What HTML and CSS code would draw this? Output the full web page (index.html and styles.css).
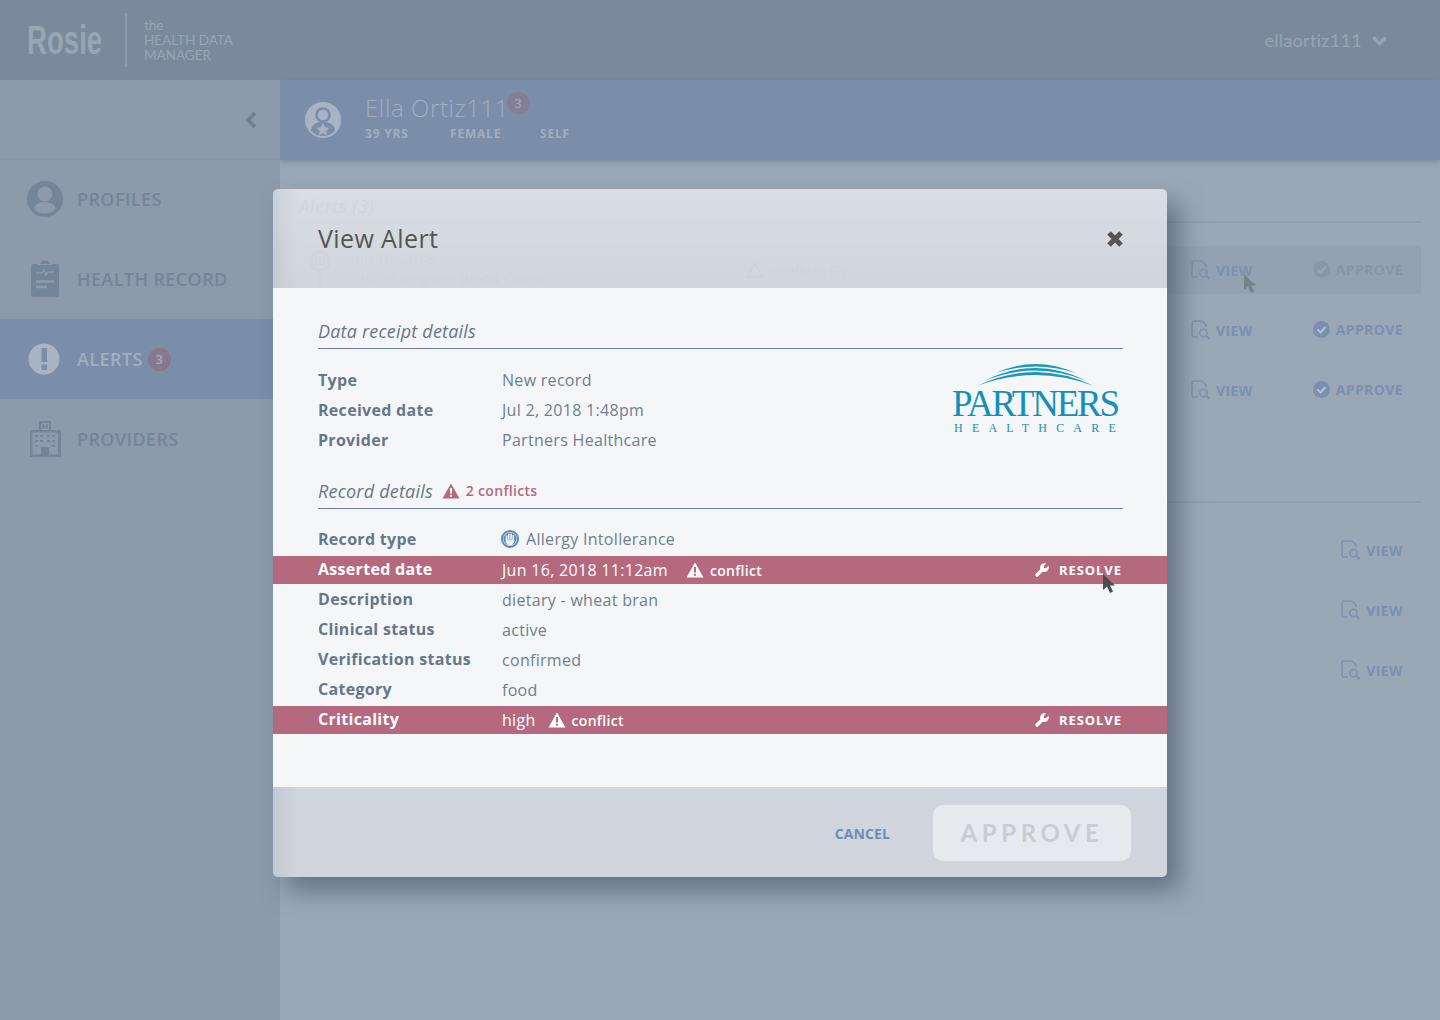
FILE: index.html
```html
<!DOCTYPE html>
<html lang="en">

<head>
  <meta charset="UTF-8" />
  <title>View Alert - Rosie</title>
  <link rel="stylesheet" href="styles.css">
</head>

<body>
  <!-- Header -->
  <div class="header">
    <div class="logo">Rosie</div>
    <div class="tagline">the<br>HEALTH DATA<br>MANAGER</div>
    <div class="user">ellaortiz111
      <svg width="15" height="11" viewBox="0 0 15 11"><path d="M1.500 2.500 7.500 8.500 13.500 2.500" fill="none" stroke="#97a5b5" stroke-width="3.400"/></svg>
    </div>
  </div>

  <div class="layout">
    <!-- Sidebar -->
    <div class="sidebar">
      <div class="toggle">
        <svg width="12" height="18" viewBox="0 0 12 18"><path d="M10 2 3 9l7 7" fill="none" stroke="#6f7f92" stroke-width="3.600"/></svg>
      </div>
      <a class="nav-item">
        <svg width="36" height="36" viewBox="0 0 36 36"><circle cx="18" cy="18" r="18" fill="#74859a"/><circle cx="18" cy="13" r="7.500" fill="#8c9aac"/><path d="M7 27.500c1.500-4.500 6-6.500 11-6.500s9.500 2 11 6.500c-2.700 3.200-6.700 5-11 5s-8.300-1.800-11-5z" fill="#8c9aac"/></svg>
        PROFILES
      </a>
      <a class="nav-item">
        <svg width="36" height="38" viewBox="0 0 36 38"><path d="M6 4h7l2-3h6l2 3h7a2 2 0 0 1 2 2v29a2 2 0 0 1-2 2H6a2 2 0 0 1-2-2V6a2 2 0 0 1 2-2z" fill="#74859a"/><path d="M11 4.500h14" stroke="#8c9aac" stroke-width="1"/><path d="M9 13h6l2-3 2 5 2-3h6" fill="none" stroke="#8c9aac" stroke-width="1.600"/><path d="M9 21.500h18M9 27h11" stroke="#8c9aac" stroke-width="2.400"/></svg>
        HEALTH RECORD
      </a>
      <a class="nav-item active">
        <svg width="36" height="36" viewBox="0 0 36 36"><circle cx="17" cy="18" r="15.500" fill="#a7b4c4"/><rect x="14.500" y="7" width="5.500" height="14" fill="#7a8da9"/><rect x="14.500" y="23.500" width="5.500" height="5.500" fill="#7a8da9"/></svg>
        ALERTS <span class="badge">3</span>
      </a>
      <a class="nav-item">
        <svg width="36" height="38" viewBox="0 0 36 38"><path d="M12 1h12v9h8a2 2 0 0 1 2 2v25H3V12a2 2 0 0 1 2-2h7z" fill="#74859a"/><rect x="14" y="3" width="8" height="7" fill="#8c9aac"/><path d="M16 4v5M20 4v5M16 6.500h4" stroke="#74859a" stroke-width="1.400"/><rect x="5.500" y="12.500" width="25.500" height="22" fill="#8c9aac"/><path d="M8 16h3M13 16h3M20 16h3M25 16h3M8 21h3M13 21h3M20 21h3M25 21h3M8 26h3M25 26h3" stroke="#74859a" stroke-width="2.200"/><rect x="14" y="27" width="8" height="9" fill="#74859a"/></svg>
        PROVIDERS
      </a>
    </div>

    <!-- Main -->
    <div class="main">
      <div class="banner">
        <svg class="avatar" width="36" height="36" viewBox="0 0 36 36"><circle cx="18" cy="18" r="18" fill="#a7b4c4"/><circle cx="18" cy="13" r="6.500" fill="none" stroke="#7a8da9" stroke-width="2.600"/><path d="M6 29c0-6 5-9 12-9s12 3 12 9c-3 3-7 5-12 5S9 32 6 29z" fill="#7a8da9"/><path d="m18 21 2 4.200 4.600.6-3.400 3.100.9 4.600-4.100-2.300-4.100 2.300.9-4.600-3.400-3.100 4.600-.6z" fill="#a7b4c4"/></svg>
        <div>
          <div class="patient-name">Ella Ortiz111<span class="name-badge">3</span></div>
          <div class="patient-meta">
            <span class="meta-age">39 YRS</span>
            <span class="meta-sex">FEMALE</span>
            <span>SELF</span>
          </div>
        </div>
      </div>

      <div class="content">
        <h3 class="alerts-title">Alerts (3)</h3>
        <div class="alert-row hover">
          <svg class="row-icon" width="22" height="48" viewBox="0 0 22 48"><circle cx="11" cy="15" r="9.500" fill="none" stroke="#75859a" stroke-width="2"/><path d="M7 11h8v8H7z" fill="none" stroke="#75859a" stroke-width="1.500"/><path d="M11 25v23" stroke="#75859a" stroke-width="1"/></svg>
          <div class="row-text">Jun 16, 2018<br>CBC - Complete Blood Count</div>
          <div class="row-conflict">
            <svg width="18" height="16" viewBox="0 0 18 16"><path d="M9 1 17 15H1z" fill="none" stroke="#75859a" stroke-width="2"/></svg>
            conflicts (2)
          </div>
          <a class="row-view"><svg width="20" height="20" viewBox="0 0 20 20"><path d="M11 1H3a2 2 0 0 0-2 2v12a2 2 0 0 0 2 2h4M11 1l4 4v2" fill="none" stroke="#7f93ae" stroke-width="1.500"/><circle cx="12.500" cy="13" r="3.700" fill="none" stroke="#7f93ae" stroke-width="1.500"/><path d="m15.500 16 3 3" stroke="#7f93ae" stroke-width="1.800"/></svg>VIEW</a>
          <a class="row-approve muted"><svg width="17" height="17" viewBox="0 0 17 17"><circle cx="8.500" cy="8.500" r="8.500" fill="#8896a8"/><path d="m4.500 8.500 3 3 5-5.500" fill="none" stroke="#9aa7b7" stroke-width="2.200"/></svg>APPROVE</a>
        </div>
        <div class="alert-row">
          <a class="row-view"><svg width="20" height="20" viewBox="0 0 20 20"><path d="M11 1H3a2 2 0 0 0-2 2v12a2 2 0 0 0 2 2h4M11 1l4 4v2" fill="none" stroke="#7f93ae" stroke-width="1.500"/><circle cx="12.500" cy="13" r="3.700" fill="none" stroke="#7f93ae" stroke-width="1.500"/><path d="m15.500 16 3 3" stroke="#7f93ae" stroke-width="1.800"/></svg>VIEW</a>
          <a class="row-approve"><svg width="17" height="17" viewBox="0 0 17 17"><circle cx="8.500" cy="8.500" r="8.500" fill="#7a90ad"/><path d="m4.500 8.500 3 3 5-5.500" fill="none" stroke="#b4bfcc" stroke-width="2.200"/></svg>APPROVE</a>
        </div>
        <div class="alert-row">
          <a class="row-view"><svg width="20" height="20" viewBox="0 0 20 20"><path d="M11 1H3a2 2 0 0 0-2 2v12a2 2 0 0 0 2 2h4M11 1l4 4v2" fill="none" stroke="#7f93ae" stroke-width="1.500"/><circle cx="12.500" cy="13" r="3.700" fill="none" stroke="#7f93ae" stroke-width="1.500"/><path d="m15.500 16 3 3" stroke="#7f93ae" stroke-width="1.800"/></svg>VIEW</a>
          <a class="row-approve"><svg width="17" height="17" viewBox="0 0 17 17"><circle cx="8.500" cy="8.500" r="8.500" fill="#7a90ad"/><path d="m4.500 8.500 3 3 5-5.500" fill="none" stroke="#b4bfcc" stroke-width="2.200"/></svg>APPROVE</a>
        </div>

        <div class="history">
          <div class="history-row"><a class="row-view"><svg width="20" height="20" viewBox="0 0 20 20"><path d="M11 1H3a2 2 0 0 0-2 2v12a2 2 0 0 0 2 2h4M11 1l4 4v2" fill="none" stroke="#7f93ae" stroke-width="1.500"/><circle cx="12.500" cy="13" r="3.700" fill="none" stroke="#7f93ae" stroke-width="1.500"/><path d="m15.500 16 3 3" stroke="#7f93ae" stroke-width="1.800"/></svg>VIEW</a></div>
          <div class="history-row"><a class="row-view"><svg width="20" height="20" viewBox="0 0 20 20"><path d="M11 1H3a2 2 0 0 0-2 2v12a2 2 0 0 0 2 2h4M11 1l4 4v2" fill="none" stroke="#7f93ae" stroke-width="1.500"/><circle cx="12.500" cy="13" r="3.700" fill="none" stroke="#7f93ae" stroke-width="1.500"/><path d="m15.500 16 3 3" stroke="#7f93ae" stroke-width="1.800"/></svg>VIEW</a></div>
          <div class="history-row"><a class="row-view"><svg width="20" height="20" viewBox="0 0 20 20"><path d="M11 1H3a2 2 0 0 0-2 2v12a2 2 0 0 0 2 2h4M11 1l4 4v2" fill="none" stroke="#7f93ae" stroke-width="1.500"/><circle cx="12.500" cy="13" r="3.700" fill="none" stroke="#7f93ae" stroke-width="1.500"/><path d="m15.500 16 3 3" stroke="#7f93ae" stroke-width="1.800"/></svg>VIEW</a></div>
        </div>
      </div>
    </div>
  </div>

  <svg class="cursor cursor-back" width="14" height="22" viewBox="0 0 14 22"><path d="M1 1v16l4-3.500 3 6.500 3-1.500-3-6h5z" fill="#75828f"/></svg>

  <!-- Modal -->
  <div class="modal">
    <div class="modal-head">
      <h2>View Alert</h2>
      <svg width="18" height="18" viewBox="0 0 18 18"><path d="M3 3l12 12M15 3 3 15" stroke="#555" stroke-width="5"/></svg>
    </div>

    <div class="modal-body">
      <div class="section-head">Data receipt details</div>
      <div class="receipt">
        <div class="details">
          <div class="detail-row"><b>Type</b><span>New record</span></div>
          <div class="detail-row"><b>Received date</b><span>Jul 2, 2018 1:48pm</span></div>
          <div class="detail-row"><b>Provider</b><span>Partners Healthcare</span></div>
        </div>
        <div class="partners">
          <svg width="136" height="24" viewBox="0 0 136 24"><path d="M10 22Q68-6 127 22Q68 0 10 22z" fill="#1c96bb"/><path d="M17 17Q68-9 120 17Q68-4 17 17z" fill="#1c96bb"/><path d="M29 9Q68-9 109 9Q68-4 29 9z" fill="#1c96bb"/></svg>
          <div class="partners-name">PARTNERS</div>
          <div class="partners-sub">HEALTHCARE</div>
        </div>
      </div>

      <div class="section-head second">Record details
        <svg width="18" height="16" viewBox="0 0 18 16"><path d="M9 .5 17.500 15.500H.5z" fill="#b5697e"/><path d="M9 5v5.500M9 11.800v2" stroke="#f4f6f8" stroke-width="2"/></svg>
        <span class="conflict-count">2 conflicts</span>
      </div>

      <div class="details record">
        <div class="detail-row"><b>Record type</b><span class="with-icon">
          <svg width="18" height="18" viewBox="0 0 18 18"><circle cx="9" cy="9" r="8" fill="#f4f6f8" stroke="#5b8ab9" stroke-width="2"/><circle cx="9" cy="9" r="6.500" fill="#5b8ab9"/><path d="M5.500 10V5.500M7.700 9V3.800M10 9V3.800M12.300 10V5" stroke="#fff" stroke-width="1.500"/><path d="M4.800 9.500h8.300v2.500l-2 3H7l-2.200-3z" fill="#fff"/><path d="M7 11h.8M9.500 11h.8M8 13h.8" stroke="#5b8ab9" stroke-width=".8"/></svg>
          Allergy Intollerance</span></div>
        <div class="detail-row conflict"><b>Asserted date</b><span>Jun 16, 2018 11:12am</span>
          <svg class="warn" width="18" height="16" viewBox="0 0 18 16"><path d="M9 .5 17.500 15.500H.5z" fill="#fff"/><path d="M9 5v5.500M9 11.800v2" stroke="#b5697e" stroke-width="2"/></svg>
          <em>conflict</em>
          <a class="resolve"><svg width="14" height="14" viewBox="0 0 14 14"><path d="M2 12 7.500 6.500" stroke="#fff" stroke-width="3.200" stroke-linecap="round"/><path d="M13.500 2.800 11 5.300 9 5 8.700 3 11.200.5A4.500 4.500 0 0 0 5.500 6.500L7.500 8.500A4.500 4.500 0 0 0 13.500 2.800z" fill="#fff"/></svg>RESOLVE</a>
        </div>
        <div class="detail-row"><b>Description</b><span>dietary - wheat bran</span></div>
        <div class="detail-row"><b>Clinical status</b><span>active</span></div>
        <div class="detail-row"><b>Verification status</b><span>confirmed</span></div>
        <div class="detail-row"><b>Category</b><span>food</span></div>
        <div class="detail-row conflict"><b>Criticality</b><span>high</span>
          <svg class="warn near" width="18" height="16" viewBox="0 0 18 16"><path d="M9 .5 17.500 15.500H.5z" fill="#fff"/><path d="M9 5v5.500M9 11.800v2" stroke="#b5697e" stroke-width="2"/></svg>
          <em>conflict</em>
          <a class="resolve"><svg width="14" height="14" viewBox="0 0 14 14"><path d="M2 12 7.500 6.500" stroke="#fff" stroke-width="3.200" stroke-linecap="round"/><path d="M13.500 2.800 11 5.300 9 5 8.700 3 11.200.5A4.500 4.500 0 0 0 5.500 6.500L7.500 8.500A4.500 4.500 0 0 0 13.500 2.800z" fill="#fff"/></svg>RESOLVE</a>
        </div>
      </div>
    </div>

    <div class="modal-foot">
      <a class="cancel">CANCEL</a>
      <button class="approve-btn">APPROVE</button>
    </div>
  </div>

  <svg class="cursor cursor-front" width="14" height="22" viewBox="0 0 14 22"><path d="M1 1v16l4-3.500 3 6.500 3-1.500-3-6h5z" fill="#4a4d50"/></svg>
</body>

</html>
```

FILE: styles.css
```css
* {
  box-sizing: border-box;
  margin: 0;
  padding: 0;
}

body {
  font-family: 'Open Sans', sans-serif;
  height: 1020px;
  overflow: hidden;
  background-color: #9aa7b7;
  display: flex;
  flex-direction: column;
}

/* Header */
.header {
  height: 80px;
  background-color: #7a8a9c;
  display: flex;
  align-items: center;
  padding: 0 53px 0 27px;
  color: #97a5b5;
}

.logo {
  width: 98px;
  font-family: 'Liberation Sans', sans-serif;
  font-size: 40px;
  font-weight: 700;
  transform: scaleX(0.69);
  transform-origin: left center;
}

.tagline {
  border-left: 2px solid #8f9dae;
  height: 54px;
  padding: 5px 0 0 17px;
  font-family: 'Lato', sans-serif;
  font-size: 13.5px;
  line-height: 15px;
}

.user {
  margin-left: auto;
  font-family: 'Lato', sans-serif;
  font-size: 18px;
  letter-spacing: 0.3px;
  display: flex;
  align-items: center;
  gap: 10px;
}

.layout {
  flex: 1;
  display: flex;
  min-height: 0;
}

/* Sidebar */
.sidebar {
  width: 280px;
  background-color: #8c9aac;
  position: relative;
  z-index: 1;
}

.toggle {
  height: 80px;
  border-bottom: 1px solid #8695a8;
  display: flex;
  align-items: center;
  justify-content: flex-end;
  padding-right: 23px;
}

.nav-item {
  height: 80px;
  display: flex;
  align-items: center;
  gap: 14px;
  padding-left: 27px;
  font-size: 18px;
  font-weight: 600;
  letter-spacing: 0.4px;
  color: #74859a;
}

.nav-item:nth-child(2) { margin-top: -1px; }

.nav-item.active {
  background-color: #7a8da9;
  color: #a1afc0;
}

.badge {
  width: 23px;
  height: 23px;
  border-radius: 50%;
  background-color: #86798f;
  color: #a8aebd;
  font-size: 13px;
  letter-spacing: 0;
  display: flex;
  align-items: center;
  justify-content: center;
  margin-left: -9px;
}

/* Main */
.main {
  flex: 1;
  display: flex;
  flex-direction: column;
}

.banner {
  height: 80px;
  background-color: #7a8da9;
  box-shadow: 0 2px 6px rgba(70, 85, 105, 0.35);
  display: flex;
  align-items: center;
  gap: 24px;
  padding-left: 25px;
  color: #a1afc0;
}

.patient-name {
  font-size: 24px;
  line-height: 30px;
  font-weight: 300;
  letter-spacing: 0.6px;
  margin-top: -5px;
  position: relative;
}

.name-badge {
  position: absolute;
  top: -1px;
  left: 142px;
  width: 22px;
  height: 22px;
  border-radius: 50%;
  background-color: #857e96;
  color: #9ea4b5;
  font-size: 13px;
  font-weight: 600;
  letter-spacing: 0;
  text-align: center;
  line-height: 22px;
}

.patient-meta {
  display: flex;
  font-size: 12px;
  font-weight: 700;
  letter-spacing: 0.8px;
  margin-top: 3px;
  line-height: 16px;
}

.meta-age { width: 85px; }
.meta-sex { width: 90px; }

.content {
  padding: 33px 19px 0;
}

.alerts-title {
  font-size: 18px;
  font-style: italic;
  font-weight: 400;
  letter-spacing: 0.6px;
  color: #6b7a8d;
  line-height: 26px;
  padding-bottom: 2px;
  border-bottom: 2px solid #8f9dae;
  margin-bottom: 23px;
}

.alert-row {
  height: 48px;
  margin-bottom: 12px;
  display: flex;
  align-items: center;
  color: #7a8899;
  font-size: 14.5px;
}

.alert-row.hover {
  background-color: #94a1b2;
}

.row-icon {
  margin-left: 10px;
  align-self: flex-start;
}

.row-text {
  margin-left: 20px;
  width: 395px;
  line-height: 20px;
  margin-top: -3px;
}

.row-conflict {
  display: flex;
  align-items: center;
  gap: 6px;
}

.row-view,
.row-approve {
  display: flex;
  align-items: center;
  font-size: 14px;
  font-weight: 700;
  letter-spacing: 0.4px;
  color: #7a90ad;
}

.row-view {
  gap: 5px;
  margin-left: auto;
}

.row-approve {
  gap: 6px;
  margin-left: 60px;
  margin-right: 18px;
  padding-bottom: 2px;
}

.row-approve.muted {
  color: #8896a8;
}

.history {
  margin-top: 87px;
  border-top: 2px solid #8f9dae;
  padding-top: 23px;
}

.history-row {
  height: 48px;
  margin-bottom: 12px;
  display: flex;
  align-items: center;
  padding-right: 18px;
}

.cursor {
  position: absolute;
  z-index: 3;
}

.cursor-back {
  left: 1243px;
  top: 273px;
}

.cursor-front {
  left: 1102px;
  top: 573px;
}

/* Modal */
.modal {
  position: absolute;
  z-index: 2;
  left: 273px;
  top: 189px;
  width: 894px;
  height: 688px;
  border-radius: 5px;
  overflow: hidden;
  display: flex;
  flex-direction: column;
  box-shadow: 13px 14px 24px rgba(60, 72, 85, 0.55);
}

.modal-head {
  height: 99px;
  flex: none;
  background:
    linear-gradient(90deg, rgba(150, 162, 180, 0.2), transparent 26px),
    linear-gradient(rgba(228, 232, 238, 0.84), rgba(217, 220, 226, 0.88));
  display: flex;
  align-items: center;
  justify-content: space-between;
  padding: 0 43px 0 45px;
}

.modal-head h2 {
  font-size: 25px;
  font-weight: 500;
  letter-spacing: 0.4px;
  color: #555;
  margin-top: -2px;
}

.modal-body {
  flex: 1;
  background-color: #f4f6f8;
  padding-top: 32px;
  color: #6f7f8f;
}

.section-head {
  margin: 0 44px 0 45px;
  height: 29px;
  border-bottom: 1px solid #6b7f96;
  font-size: 18px;
  font-style: italic;
  letter-spacing: 0.2px;
  line-height: 23px;
  color: #66778a;
  display: flex;
  gap: 9px;
  align-items: flex-start;
}

.section-head svg {
  margin-top: 3px;
}

.section-head.second {
  margin-top: 26px;
}

.conflict-count {
  font-size: 14px;
  font-style: normal;
  font-weight: 600;
  letter-spacing: 0.3px;
  color: #b5697e;
  margin-left: -3px;
  line-height: 22px;
}

.receipt {
  display: flex;
  justify-content: space-between;
  padding-right: 46px;
}

.details {
  flex: 1;
  display: flex;
  flex-direction: column;
  gap: 2px;
  padding-top: 17px;
}

.detail-row {
  height: 28px;
  display: flex;
  align-items: center;
  padding: 0 45px;
  font-size: 16px;
  letter-spacing: 0.3px;
}

.detail-row b {
  width: 184px;
  flex: none;
  font-weight: 700;
  color: #66778a;
}

.record .detail-row b {
  margin-top: -2px;
}

.with-icon {
  display: flex;
  align-items: center;
  gap: 7px;
  margin-left: -1px;
  margin-top: -2px;
}

.detail-row.conflict {
  background-color: #b5697e;
  color: #fff;
}

.detail-row.conflict b {
  color: #fff;
}

.warn {
  margin-left: 18px;
}

.warn.near {
  margin-left: 12px;
}

.detail-row em {
  font-style: normal;
  font-size: 14px;
  font-weight: 600;
  margin-left: 6px;
}

.resolve {
  margin-left: auto;
  display: flex;
  align-items: center;
  gap: 10px;
  font-size: 13px;
  font-weight: 700;
  letter-spacing: 0.95px;
}

.partners {
  width: 172px;
  display: flex;
  flex-direction: column;
  align-items: center;
  padding-top: 15px;
  color: #1490b8;
}

.partners-name {
  font-family: 'Liberation Serif', serif;
  font-size: 37px;
  line-height: 30px;
  letter-spacing: -2.2px;
  margin-top: 1px;
}

.partners-sub {
  font-family: 'Liberation Serif', serif;
  font-size: 12px;
  letter-spacing: 9.2px;
  line-height: 14px;
  margin-top: 2px;
  margin-right: -9px;
}

.modal-foot {
  height: 90px;
  flex: none;
  background:
    linear-gradient(90deg, rgba(150, 162, 180, 0.2), transparent 26px),
    rgba(215, 219, 226, 0.88);
  display: flex;
  align-items: center;
  justify-content: flex-end;
  gap: 43px;
  padding: 2px 36px 0 0;
}

.cancel {
  font-size: 14px;
  font-weight: 700;
  letter-spacing: 0.1px;
  color: #6a8fb8;
  margin-top: 1px;
}

.approve-btn {
  width: 198px;
  height: 56px;
  border: none;
  border-radius: 10px;
  padding-bottom: 2px;
  background-color: #e6e9ee;
  color: #c9ccd1;
  font-family: 'Lato', sans-serif;
  font-size: 24px;
  font-weight: 700;
  letter-spacing: 4.6px;
}
```
